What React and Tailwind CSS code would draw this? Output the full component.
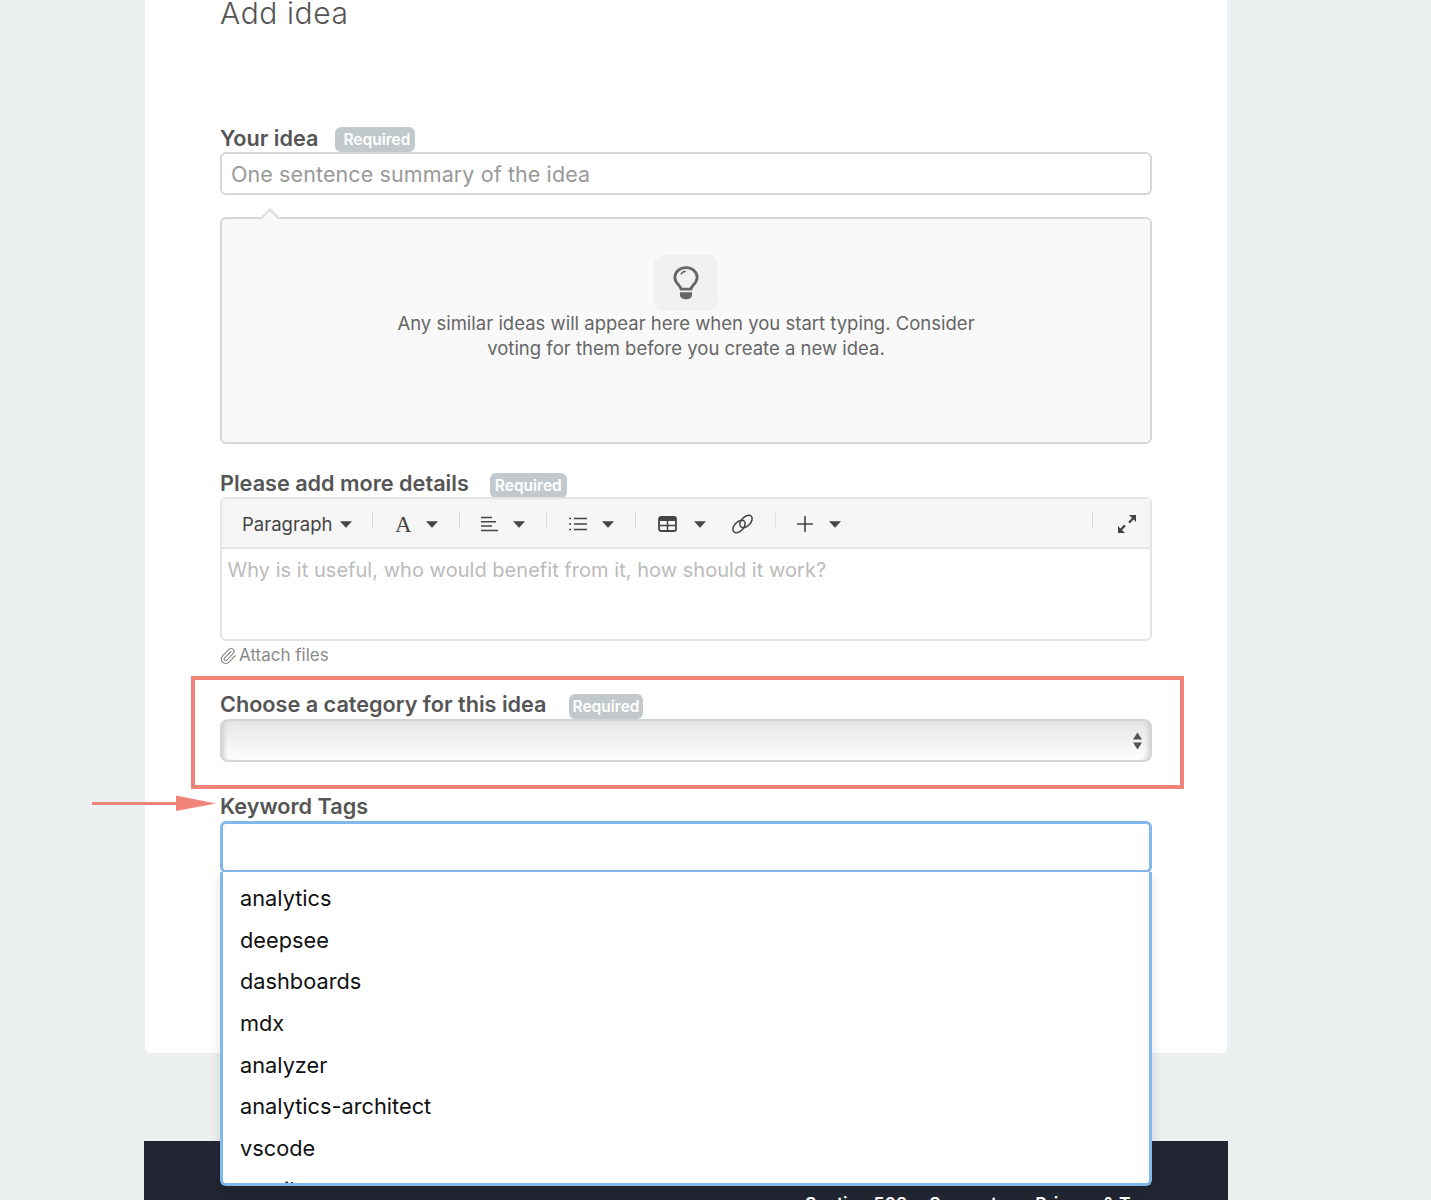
import { Paperclip } from 'lucide-react'

const tags = ['analytics', 'deepsee', 'dashboards', 'mdx', 'analyzer', 'analytics-architect', 'vscode', 'email']

function Caret({ className }) {
  return (
    <svg width="12" height="7" viewBox="0 0 12 7" className={`shrink-0 ${className}`}>
      <path d="M0.500 0.500h11L6 6.500z" fill="#444444" stroke="#444444" strokeWidth="0.500" strokeLinejoin="round" />
    </svg>
  )
}

function Required({ className }) {
  return (
    <span className={`inline-block h-[25px] rounded-[6px] bg-[#c1c9cc] text-[15.5px] leading-[26px] font-semibold text-white ${className}`}>
      Required
    </span>
  )
}

function Sep({ className }) {
  return <span className={`-mt-[8px] block h-[16px] w-px shrink-0 bg-[#dedede] ${className}`} />
}

function FieldLabel({ children, className }) {
  return <span className={`text-[21.65px] font-semibold text-[#555555] ${className}`}>{children}</span>
}

export default function App() {
  return (
    <div className="h-[1200px] overflow-hidden bg-[#ecf0f1] font-['Inter',sans-serif]">
      <div className="relative ml-[144px] flex w-[1084px] flex-col">
        {/* main card */}
        <div className="mx-px h-[1053px] rounded-b-[5px] bg-white pl-[75px]">
          <div className="flex w-[932px] flex-col">
            <h1 className="h-[126px] text-[30px] leading-[27px] font-light tracking-[0.6px] text-[#555555]">Add idea</h1>

            <div className="flex h-[25px] items-center">
              <FieldLabel>Your idea</FieldLabel>
              <Required className="mt-[2px] ml-[17px] pr-[5px] pl-[8px]" />
            </div>
            <div className="mt-px flex h-[43px] items-center rounded-[6px] border-2 border-[#d6d6d6] px-[9px] pt-px text-[21.5px] tracking-[0.1px] text-[#999999]">
              One sentence summary of the idea
            </div>

            {/* similar ideas */}
            <div className="relative mt-[22px] flex h-[227px] flex-col items-center rounded-[6px] border-2 border-[#d6d6d6] bg-[#f9f9f9] pt-[36px]">
              <span className="absolute -top-[8px] left-[41px] size-[14px] rotate-45 border-t-2 border-l-2 border-[#dcdcdc] bg-[#f9f9f9]" />
              <div className="flex h-[56px] w-[64px] items-center justify-center rounded-[10px] bg-[#f1f1f1]">
                <svg width="26" height="37" viewBox="0 0 28 38" fill="none">
                  <path d="M8.500 25c0-4-6.500-6-6.500-12.500C2 6 7.500 2 14 2s12 4 12 10.500C26 19 19.500 21 19.500 25z" stroke="#666666" strokeWidth="3" strokeLinejoin="round" />
                  <path d="M9 8.500c1-1.500 2.500-2.500 4-2.500" stroke="#666666" strokeWidth="1.800" strokeLinecap="round" />
                  <path d="M7.500 28.500h13v2.500c0 3-3 5-6.500 5s-6.500-2-6.500-5z" fill="#666666" />
                </svg>
              </div>
              <p className="w-[600px] text-center text-[18.500px] leading-[25px] text-[#666666]">
                Any similar ideas will appear here when you start typing. Consider voting for them before you create a new idea.
              </p>
            </div>

            <div className="mt-[27px] flex h-[25px] items-center">
              <FieldLabel>Please add more details</FieldLabel>
              <Required className="mt-[3px] ml-[21px] px-[5px]" />
            </div>

            {/* editor */}
            <div className="mt-px h-[144px] rounded-[6px] border-2 border-[#e4e4e4]">
              <div className="flex h-[50px] items-center border-b-2 border-[#e6e6e6] bg-[#f6f6f6] pt-[2px] pl-[20px] text-[#444444]">
                <span className="mt-[2px] w-[90px] shrink-0 text-[18.500px]">Paragraph</span>
                <Caret className="ml-[8px]" />
                <Sep className="ml-[20px]" />
                <span className="ml-[22px] w-[17px] shrink-0 font-['Liberation_Serif',serif] text-[23px] leading-none">A</span>
                <Caret className="ml-[14px]" />
                <Sep className="ml-[21px]" />
                <svg width="17" height="16" viewBox="0 0 17 16" className="ml-[21px] shrink-0" stroke="#444444" strokeWidth="1.500">
                  <path d="M0 1.500h11M0 5.700h15M0 10h11M0 14.500h17" />
                </svg>
                <Caret className="ml-[15px]" />
                <Sep className="ml-[21px]" />
                <svg width="18" height="14" viewBox="0 0 18 14" className="ml-[22px] shrink-0" stroke="#444444" strokeWidth="1.500">
                  <path d="M5 1.500h13M5 7h13M5 12.500h13M0 1.500h2M0 7h2M0 12.500h2" />
                </svg>
                <Caret className="ml-[15px]" />
                <Sep className="ml-[21px]" />
                <svg width="19" height="16" viewBox="0 0 19 16" className="ml-[22px] shrink-0" fill="none" stroke="#444444">
                  <rect x="1" y="1" width="17" height="14" rx="2" strokeWidth="1.800" />
                  <path d="M1 3.500h17" strokeWidth="3" />
                  <path d="M1 9.500h17M9.500 5v10" strokeWidth="1.500" />
                </svg>
                <Caret className="ml-[17px]" />
                <svg width="23" height="20" viewBox="0 0 23 20" className="ml-[25px] shrink-0" fill="none" stroke="#444444" strokeWidth="1.500">
                  <ellipse cx="8" cy="12.500" rx="7.500" ry="4.500" transform="rotate(-45 8 12.500)" />
                  <ellipse cx="15" cy="7.500" rx="7.500" ry="4.500" transform="rotate(-45 15 7.500)" />
                </svg>
                <Sep className="ml-[21px]" />
                <svg width="16" height="16" viewBox="0 0 16 16" className="ml-[21px] shrink-0" stroke="#444444" strokeWidth="1.600">
                  <path d="M8 0v16M0 8h16" />
                </svg>
                <Caret className="ml-[16px]" />
                <Sep className="ml-[251px]" />
                <svg width="20" height="20" viewBox="0 0 20 20" className="ml-[24px] shrink-0" fill="#444444">
                  <path d="M12 1h7v7l-2.400-2.400-3.800 3.800-1.600-1.600 3.800-3.800zM1 19v-7l2.400 2.400 3.800-3.800 1.600 1.600-3.800 3.800L8 19z" />
                </svg>
              </div>
              <div className="pt-[6px] pl-[5.500px] text-[20px] tracking-[0.03px] text-[#bbbbbb]">
                Why is it useful, who would benefit from it, how should it work?
              </div>
            </div>

            <div className="mt-[3px] flex h-[24px] items-center text-[17px] text-[#8a8a8a]">
              <Paperclip size={18} strokeWidth={1.500} className="mr-[2px] -ml-px" />
              Attach files
            </div>

            <div className="mt-[25px] flex h-[25px] items-center">
              <FieldLabel className="-mt-[2px]">Choose a category for this idea</FieldLabel>
              <Required className="mt-[2px] ml-[22px] px-[4px]" />
            </div>
            <div className="mt-px flex h-[43px] items-center justify-end rounded-[8px] border-2 border-[#d4d4d4] bg-gradient-to-b from-[#e6e6e6] to-[#fdfdfd] pr-[8px] shadow-[inset_5px_0_4px_-3px_#cfcfcf,inset_-5px_0_4px_-3px_#cfcfcf]">
              <svg width="9" height="18" viewBox="0 0 9 18" fill="#555555">
                <path d="M4.500 0.500L9 7.500H0zM0 10.500h9L4.500 17.500z" />
              </svg>
            </div>

            <div className="mt-[33px] flex h-[25px] items-center">
              <FieldLabel className="-mt-[2px]">Keyword Tags</FieldLabel>
            </div>
            <div className="relative z-10 mt-px h-[52px] rounded-[6px] border-[3px] border-[#82b9ec] bg-white">
              <div className="absolute -inset-x-[3px] top-[48px] h-[314px] overflow-hidden rounded-b-[6px] border-[3px] border-t-0 border-[#82b9ec] bg-white pt-[5px] pl-[17px] shadow-[0_4px_12px_rgba(0,0,0,0.12)]">
                {tags.map((tag) => (
                  <div key={tag} className="h-[41.700px] text-[21.75px] leading-[43px] text-[#111111]">
                    {tag}
                  </div>
                ))}
              </div>
            </div>
          </div>
        </div>

        {/* footer */}
        <div className="mt-[88px] flex h-[59px] items-start bg-[#222632] pt-[52px] pl-[661px] text-[17.500px] leading-[22px] font-semibold whitespace-nowrap text-white">
          <span>Section 508</span>
          <span className="ml-[22px]">Support</span>
          <span className="ml-[38px]">Privacy &amp; Terms</span>
        </div>

        {/* annotation: red box and arrow */}
        <div className="pointer-events-none absolute top-[676px] left-[47px] z-20 h-[113px] w-[993px] border-[4px] border-[#f28379]" />
        <svg width="126" height="20" viewBox="0 0 126 20" className="pointer-events-none absolute top-[794px] -left-[52px] z-20">
          <path d="M0 9.500h86" stroke="#f28379" strokeWidth="3" strokeLinecap="round" />
          <path d="M84 1.500L124 9.500L84 17z" fill="#f28379" />
        </svg>
      </div>
    </div>
  )
}
